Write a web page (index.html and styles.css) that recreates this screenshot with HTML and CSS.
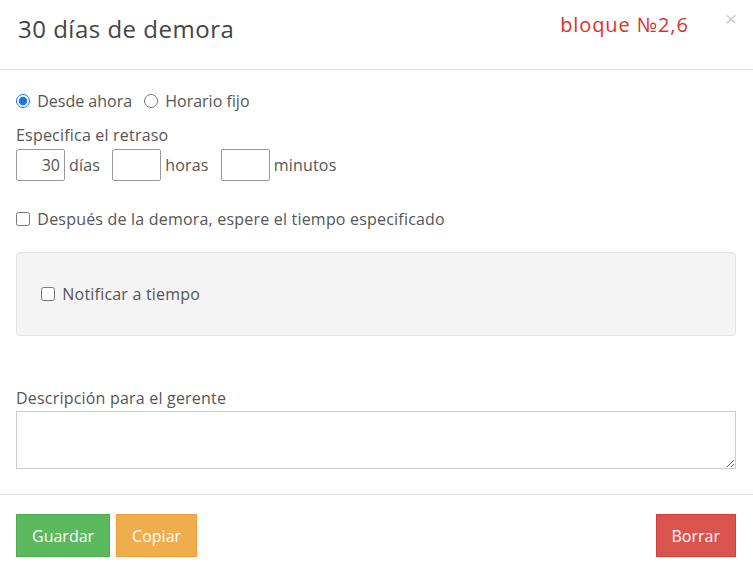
FILE: index.html
```html
<!DOCTYPE html>
<html lang="es">

<head>
    <meta charset="UTF-8">
    <meta name="viewport" content="width=device-width, initial-scale=1.0">
    <title>30 días de demora</title>
    <link rel="stylesheet" href="styles.css">
</head>

<body>
    <div class="modal">
        <div class="modal-header">
            <h4 class="modal-title">30 días de demora</h4>
            <span class="block-tag">bloque №2,6</span>
            <button type="button" class="close">&times;</button>
        </div>

        <div class="modal-body">
            <div class="radio-row">
                <label class="inline"><input type="radio" name="mode" checked> Desde ahora</label>
                <label class="inline"><input type="radio" name="mode"> Horario fijo</label>
            </div>

            <div class="delay">
                <div class="delay-title">Especifica el retraso</div>
                <div class="delay-fields">
                    <input type="text" class="num" value="30"><span class="unit">días</span>
                    <input type="text" class="num"><span class="unit">horas</span>
                    <input type="text" class="num"><span class="unit">minutos</span>
                </div>
            </div>

            <label class="check"><input type="checkbox"> Después de la demora, espere el tiempo especificado</label>

            <div class="well">
                <label class="check"><input type="checkbox"> Notificar a tiempo</label>
            </div>

            <div class="form-group">
                <label for="desc" class="desc-label">Descripción para el gerente</label>
                <textarea id="desc"></textarea>
            </div>
        </div>

        <div class="modal-footer">
            <button type="button" class="btn btn-success">Guardar</button>
            <button type="button" class="btn btn-warning">Copiar</button>
            <button type="button" class="btn btn-danger">Borrar</button>
        </div>
    </div>
</body>

</html>
```

FILE: styles.css
```css
body {
    margin: 0;
    font-family: "Open Sans", Arial, sans-serif;
    font-size: 16px;
    letter-spacing: 0.2px;
    color: #555;
    background: #fff;
}

.modal {
    width: 753px;
}

.modal-header {
    display: flex;
    align-items: flex-start;
    height: 70px;
    padding: 0 16px 0 18px;
    border-bottom: 1px solid #e5e5e5;
    box-sizing: border-box;
}

.modal-title {
    margin: 12px 0 0;
    font-size: 24px;
    font-weight: 400;
    letter-spacing: 0.5px;
    color: #444;
    flex: 1;
}

.block-tag {
    margin: 11px 36px 0 0;
    font-size: 20px;
    letter-spacing: 0.9px;
    color: #e0302a;
}

.close {
    margin-top: 8px;
    padding: 0;
    border: none;
    background: none;
    font-size: 21px;
    line-height: 1;
    color: #ccc;
    cursor: pointer;
}

.modal-body {
    padding: 21px 17px 25px 16px;
}

.radio-row {
    display: flex;
    gap: 12px;
    line-height: 20px;
    letter-spacing: 0;
}

.inline input,
.check input {
    margin: 0 3px 0 0;
    width: 14px;
    height: 14px;
    vertical-align: -1px;
}

.inline input[type="radio"] {
    accent-color: #1a73e8;
}

.delay {
    margin-top: 14px;
}

.delay-title {
    line-height: 20px;
}

.delay-fields {
    display: flex;
    align-items: center;
    margin-top: 4px;
}

.num {
    width: 49px;
    height: 32px;
    padding: 0 4px;
    border: 1px solid #999;
    border-radius: 2px;
    box-sizing: border-box;
    font: inherit;
    color: #555;
    text-align: right;
}

.unit {
    margin: 0 12px 0 4px;
}

.check {
    display: block;
    line-height: 20px;
}

.modal-body > .check {
    margin-top: 28px;
}

.well {
    margin-top: 23px;
    height: 84px;
    padding: 0 24px;
    display: flex;
    align-items: center;
    background: #f4f4f4;
    border: 1px solid #e3e3e3;
    border-radius: 4px;
    box-sizing: border-box;
}

.form-group {
    margin-top: 52px;
}

.desc-label {
    display: block;
    line-height: 20px;
    margin-bottom: 3px;
}

textarea {
    display: block;
    width: 100%;
    height: 58px;
    border: 1px solid #ccc;
    box-sizing: border-box;
    font: inherit;
}

.modal-footer {
    display: flex;
    gap: 6px;
    padding: 19px 17px 18px 16px;
    border-top: 1px solid #e5e5e5;
}

.btn {
    height: 43px;
    padding: 0 15px;
    border: 1px solid transparent;
    font: inherit;
    font-size: 16px;
    color: #fff;
    cursor: pointer;
}

.btn-success {
    background: #5cb85c;
    border-color: #4cae4c;
}

.btn-warning {
    background: #f0ad4e;
    border-color: #eea236;
}

.btn-danger {
    background: #d9534f;
    border-color: #d43f3a;
    margin-left: auto;
}
```
